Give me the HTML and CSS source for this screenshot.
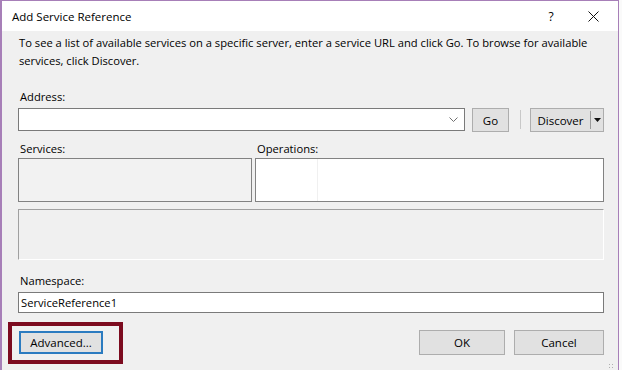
FILE: index.html
```html
<!DOCTYPE html>
<html lang="en">
<head>
  <meta charset="UTF-8" />
  <title>Add Service Reference</title>
  <link rel="stylesheet" href="styles.css">
</head>
<body>
  <div class="window">
    <div class="titlebar">
      <span class="title">Add Service Reference</span>
      <span class="help">?</span>
      <span class="close">
        <svg width="11" height="11" viewBox="0 0 11 11"><path d="M0.5 0.5 L10.5 10.5 M10.5 0.5 L0.5 10.5" stroke="#111" stroke-width="1" fill="none"/></svg>
      </span>
    </div>

    <div class="content">
      <p class="intro">To see a list of available services on a specific server, enter a service URL and click Go. To browse for available services, click Discover.</p>

      <div class="label">Address:</div>
      <div class="address-row">
        <div class="combo">
          <svg class="chevron" width="9" height="5" viewBox="0 0 9 5"><path d="M0.5 0.5 L4.5 4.5 L8.5 0.5" stroke="#707070" stroke-width="1" fill="none"/></svg>
        </div>
        <button class="btn go">Go</button>
        <div class="separator"></div>
        <div class="split-btn">
          <span class="split-main">Discover</span>
          <span class="split-arrow">
            <svg width="7" height="4" viewBox="0 0 7 4"><path d="M0 0 L7 0 L3.5 4 Z" fill="#111"/></svg>
          </span>
        </div>
      </div>

      <div class="lists">
        <div class="list-col services">
          <div class="label">Services:</div>
          <div class="listbox disabled"></div>
        </div>
        <div class="list-col operations">
          <div class="label">Operations:</div>
          <div class="listbox"><div class="col-line"></div></div>
        </div>
      </div>

      <div class="description"></div>

      <div class="label ns-label">Namespace:</div>
      <div class="textbox">ServiceReference1</div>

      <div class="footer">
        <button class="btn advanced">Advanced...</button>
        <div class="spacer"></div>
        <button class="btn ok">OK</button>
        <button class="btn cancel">Cancel</button>
      </div>
    </div>

    <div class="highlight"></div>
    <div class="grip"></div>
  </div>
</body>
</html>
```

FILE: styles.css
```css
body {
  margin: 0;
  background: #fafafa;
  font-family: 'Open Sans', 'Noto Sans', sans-serif;
  font-size: 11.2px;
  color: #000;
}

.window {
  position: relative;
  width: 616px;
  height: 369px;
  background: #f0f0f0;
  border-top: 1px solid #a77fb8;
  border-left: 2px solid #a77fb8;
  border-right: 1px solid #a77fb8;
}

.titlebar {
  display: flex;
  align-items: center;
  height: 30px;
  background: #fff;
  padding-left: 10px;
}

.title {
  flex: 1;
  font-size: 11.5px;
}

.help {
  width: 14px;
  text-align: center;
  font-size: 12px;
  margin-right: 30px;
}

.close {
  display: flex;
  margin-right: 19px;
}

.content {
  padding: 3px 14px 0 16px;
}

.intro {
  margin: 0;
  line-height: 18px;
  padding-left: 1px;
}

.label {
  line-height: 18px;
  padding-left: 2px;
}

.intro + .label {
  margin-top: 18px;
}

.address-row {
  display: flex;
  align-items: flex-start;
  margin-top: 2px;
}

.combo {
  width: 445px;
  height: 21px;
  background: #fff;
  border: 1px solid #7a7a7a;
  display: flex;
  align-items: center;
  justify-content: flex-end;
}

.chevron {
  margin-right: 6px;
}

.btn {
  font-family: inherit;
  font-size: 11.5px;
  background: #e1e1e1;
  border: 1px solid #adadad;
  color: #000;
  padding: 0;
}

.go {
  width: 37px;
  height: 24px;
  margin-left: 7px;
}

.separator {
  width: 1px;
  height: 19px;
  margin: 2px 9px 0 11px;
  background: #c8c8c8;
}

.split-btn {
  display: flex;
  width: 72px;
  height: 22px;
  background: #e1e1e1;
  border: 1px solid #adadad;
  font-size: 11.5px;
}

.split-main {
  width: 59px;
  display: flex;
  align-items: center;
  justify-content: center;
  border-right: 1px solid #9a9a9a;
  margin: 2px 0;
}

.split-arrow {
  flex: 1;
  display: flex;
  align-items: center;
  justify-content: center;
}

.lists {
  display: flex;
  gap: 3px;
  margin-top: 8px;
}

.services {
  width: 234px;
}

.operations {
  flex: 1;
}

.listbox {
  position: relative;
  height: 42px;
  background: #fff;
  border: 1px solid #828282;
}

.listbox.disabled {
  background: #f2f2f2;
}

.col-line {
  position: absolute;
  left: 61px;
  top: 0;
  bottom: 0;
  width: 1px;
  background: #f0f0f0;
}

.description {
  height: 49px;
  margin-top: 7px;
  background: #f0f0f0;
  border-top: 1px solid #a0a0a0;
  border-left: 1px solid #a0a0a0;
  border-bottom: 1px solid #fff;
  border-right: 1px solid #fff;
}

.ns-label {
  margin-top: 12px;
}

.textbox {
  margin-top: 2px;
  height: 19px;
  line-height: 19px;
  background: #fff;
  border: 1px solid #7a7a7a;
  padding-left: 2px;
}

.footer {
  display: flex;
  align-items: flex-start;
  margin-top: 17px;
}

.spacer {
  flex: 1;
}

.advanced {
  width: 84px;
  height: 23px;
  margin: 1px 0 0 1px;
  border: 2px solid #2b7bc0;
  background: #e1e1e1;
}

.ok {
  width: 86px;
  height: 25px;
}

.cancel {
  width: 90px;
  height: 25px;
  margin-left: 9px;
}

.highlight {
  position: absolute;
  left: 6px;
  top: 321px;
  width: 107px;
  height: 34px;
  border: 4px solid #7c0b1f;
}

.grip {
  position: absolute;
  right: 4px;
  bottom: 1px;
  width: 6px;
  height: 6px;
  background-image: radial-gradient(circle, #b0b0b0 0.8px, transparent 1px);
  background-size: 3px 3px;
}
```
